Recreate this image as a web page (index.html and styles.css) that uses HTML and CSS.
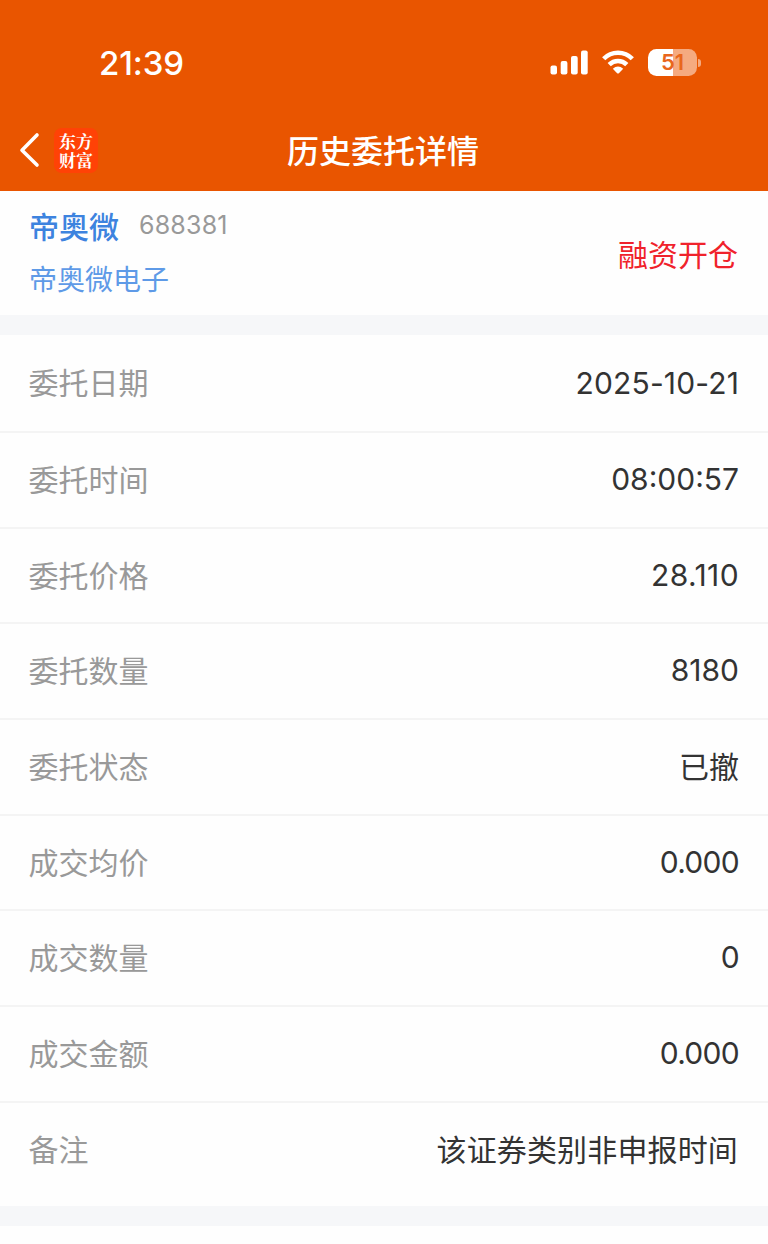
FILE: index.html
```html
<!DOCTYPE html>
<html lang="zh-CN">
<head>
<meta charset="utf-8">
<title>历史委托详情</title>
<link rel="stylesheet" href="styles.css">
</head>
<body>
<header class="top">
  <div class="status">
    <span class="clock">21:39</span>
    <div class="indicators">
      <svg class="signal" width="38" height="25" viewBox="0 0 38 25" fill="#fff"><rect x="0.5" y="15.5" width="6.5" height="9" rx="2"/><rect x="10.7" y="11" width="6.7" height="13.5" rx="2"/><rect x="21" y="6" width="6.7" height="18.500" rx="2"/><rect x="31" y="0.500" width="6.700" height="24" rx="2"/></svg>
      <svg class="wifi" width="32" height="24" viewBox="0 0 32 24"><g fill="none" stroke="#fff" stroke-width="4.500"><path d="M1.700 8.700C9.500 .6 22.500 .6 30.300 8.700"/><path d="M7.200 14.700C12.200 9.700 19.800 9.700 24.800 14.700"/></g><path fill="#fff" d="M10.800 18.700Q16 14.500 21.200 18.700L16.900 23.200Q16 24 15.100 23.200Z"/></svg>
      <div class="battery"><span class="level">51</span><i class="nub"></i></div>
    </div>
  </div>
  <nav class="nav">
    <div class="nav-left">
      <svg class="back" width="22" height="36" viewBox="0 0 22 36" fill="none" stroke="#fff" stroke-width="3.600" stroke-linecap="round" stroke-linejoin="round"><path d="M19 3L4 18.200L19 33"/></svg>
      <div class="logo">东方<br>财富</div>
    </div>
    <h1 class="title">历史委托详情</h1>
  </nav>
</header>
<section class="stock">
  <div class="names">
    <div class="name-line"><span class="name">帝奥微</span><span class="code">688381</span></div>
    <div class="company">帝奥微电子</div>
  </div>
  <div class="action">融资开仓</div>
</section>
<main class="details">
  <div class="row"><span class="label">委托日期</span><span class="value date">2025-10-21</span></div>
  <div class="row"><span class="label">委托时间</span><span class="value num">08:00:57</span></div>
  <div class="row"><span class="label">委托价格</span><span class="value num price">28.110</span></div>
  <div class="row"><span class="label">委托数量</span><span class="value num">8180</span></div>
  <div class="row"><span class="label">委托状态</span><span class="value">已撤</span></div>
  <div class="row"><span class="label">成交均价</span><span class="value num zero">0.000</span></div>
  <div class="row"><span class="label">成交数量</span><span class="value num zero">0</span></div>
  <div class="row"><span class="label">成交金额</span><span class="value num zero">0.000</span></div>
  <div class="row last"><span class="label">备注</span><span class="value remark">该证券类别非申报时间</span></div>
</main>
</body>
</html>
```

FILE: styles.css
```css
* { box-sizing: border-box; }
body {
  margin: 0;
  height: 1244px;
  overflow: hidden;
  background: #fefefe;
  color: #333;
  font-family: Inter, "Noto Sans CJK SC", sans-serif;
}
.top { height: 191px; background: #e95500; color: #fff; }
.status {
  height: 109px;
  padding: 15px 71px 0 99px;
  display: flex;
  align-items: center;
  justify-content: space-between;
}
.clock { padding-top: 2px; font-size: 33px; font-weight: 500; line-height: 40px; letter-spacing: -0.1px; }
.indicators { display: flex; align-items: center; }
.wifi { margin-left: 14px; }
.battery {
  position: relative;
  width: 49px;
  height: 27px;
  margin-left: 14px;
  border-radius: 8.5px;
  background: linear-gradient(90deg, #fff 51%, #f5aa80 51%);
  text-align: center;
}
.level { display: block; font-size: 22px; font-weight: 600; line-height: 27px; color: #e9661c; }
.nub {
  position: absolute;
  right: -4px;
  top: 10px;
  width: 3px;
  height: 8px;
  border-radius: 0 3px 3px 0;
  background: #f5aa80;
}
.nav {
  height: 82px;
  padding: 0 20px 0 18px;
  display: grid;
  grid-template-columns: 1fr auto 1fr;
  align-items: center;
}
.nav-left { display: flex; align-items: center; gap: 14px; }
.logo {
  width: 44px;
  height: 45px;
  padding-top: 3px;
  border-radius: 8px;
  background: #ff4206;
  text-align: center;
  font: 700 17px/19px "Noto Serif CJK SC", "Noto Sans CJK SC", serif;
}
.title { margin: 0; padding-top: 3px; font-size: 32px; font-weight: 500; line-height: 40px; }
.stock {
  height: 144px;
  padding: 0 30px 0 29px;
  border-bottom: 20px solid #f6f7f9;
  display: flex;
  align-items: center;
  justify-content: space-between;
}
.name-line { display: flex; align-items: center; gap: 20px; height: 54px; padding-bottom: 7px; }
.name { font-size: 30px; font-weight: 500; color: #3d83df; }
.code { padding-top: 1px; font-size: 25px; color: #999; letter-spacing: 0.2px; }
.company { font-size: 28px; line-height: 50px; color: #5e9ae7; }
.action { font-size: 30px; color: #f0222b; }
.row {
  height: 95.7px;
  padding: 0 29px 0 28.5px;
  border-bottom: 2px solid #f4f4f4;
  display: flex;
  align-items: center;
  justify-content: space-between;
  font-size: 30px;
  line-height: 40px;
}
.row:first-child { height: 98px; }
.label { color: #999; }
.date { letter-spacing: 0.15px; }
.num { padding-bottom: 2px; }
.price { letter-spacing: 0.4px; }
.zero { letter-spacing: -0.7px; }
.remark { padding-right: 1px; letter-spacing: 0.15px; }
.row.last { height: 123px; padding-bottom: 9px; border-bottom: 20px solid #f6f7f9; }
```
